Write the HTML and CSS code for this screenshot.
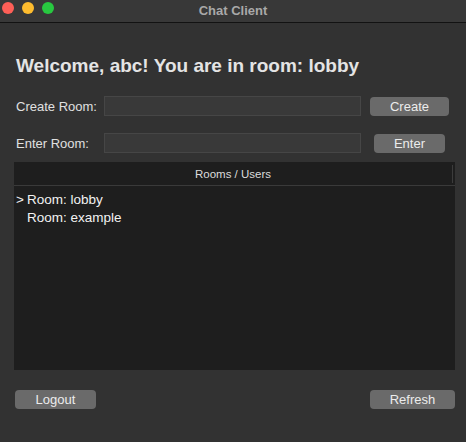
FILE: index.html
```html
<!DOCTYPE html>
<html>
<head>
<meta charset="utf-8">
<link rel="stylesheet" href="styles.css">
</head>
<body>
<div class="window">
  <div class="titlebar">
    <div class="lights">
      <span class="light red"></span>
      <span class="light yellow"></span>
      <span class="light green"></span>
    </div>
    <div class="title">Chat Client</div>
  </div>
  <div class="content">
    <h1 class="welcome">Welcome, abc! You are in room: lobby</h1>
    <div class="form">
      <label class="label">Create Room:</label>
      <div class="input"></div>
      <div class="btncell"><button class="btn btn-create">Create</button></div>
      <label class="label">Enter Room:</label>
      <div class="input"></div>
      <div class="btncell"><button class="btn btn-enter">Enter</button></div>
    </div>
    <div class="table">
      <div class="thead">
        <div class="th">Rooms / Users</div>
        <div class="thsep"></div>
      </div>
      <div class="tbody">
        <div class="row"><span class="arrow">&gt;</span><span>Room: lobby</span></div>
        <div class="row"><span class="arrow"></span><span>Room: example</span></div>
      </div>
    </div>
    <div class="footer">
      <button class="btn btn-logout">Logout</button>
      <button class="btn btn-refresh">Refresh</button>
    </div>
  </div>
</div>
</body>
</html>
```
FILE: styles.css
```css
html, body {
  margin: 0;
  padding: 0;
  background: #323232;
  font-family: "Liberation Sans", Arial, sans-serif;
  color: #e6e6e6;
}
.window {
  width: 466px;
  height: 442px;
  background: #323232;
}
.titlebar {
  height: 22px;
  background: #383838;
  border-bottom: 1px solid #121212;
  position: relative;
  display: flex;
  align-items: center;
  justify-content: center;
}
.lights {
  position: absolute;
  left: 2px;
  top: 2px;
  display: flex;
  gap: 8px;
}
.light {
  width: 12px;
  height: 12px;
  border-radius: 50%;
  display: block;
}
.red { background: #fe5f57; }
.yellow { background: #febc2e; }
.green { background: #28c840; }
.title {
  font-size: 13px;
  font-weight: bold;
  color: #a9a9a9;
  margin-top: -2px;
}
.content {
  padding: 0 11px 0 14px;
}
.welcome {
  margin: 32px 0 0 2px;
  font-size: 19px;
  font-weight: bold;
  color: #e4e4e4;
  line-height: 22px;
}
.form {
  margin-top: 19px;
  display: grid;
  grid-template-columns: 90px 257px 97px;
  grid-auto-rows: 20px;
  row-gap: 17px;
  align-items: center;
}
.label {
  font-size: 13px;
  padding-left: 2px;
  color: #e0e0e0;
}
.input {
  background: #393939;
  border: 1px solid #464646;
  box-sizing: border-box;
  height: 20px;
}
.btncell {
  display: flex;
  justify-content: center;
}
.btn {
  font-family: "Liberation Sans", Arial, sans-serif;
  font-size: 13px;
  color: #ececec;
  background: #6a6a6a;
  border: none;
  border-radius: 4px;
  height: 19px;
  padding: 0;
  line-height: 19px;
}
.btn-create { width: 79px; }
.btn-enter { width: 71px; }
.table {
  margin-top: 9px;
  height: 208px;
  background: #1e1e1e;
  width: 441px;
}
.thead {
  height: 23px;
  border-bottom: 1px solid #3a3a3a;
  display: flex;
  align-items: center;
  position: relative;
}
.th {
  flex: 1;
  text-align: center;
  font-size: 11.5px;
  color: #dcdcdc;
}
.thsep {
  width: 1px;
  height: 18px;
  background: #3c3c3c;
  margin-right: 2px;
}
.tbody {
  padding-top: 4px;
}
.row {
  display: flex;
  height: 18px;
  align-items: center;
  font-size: 13.5px;
  color: #f2f2f2;
}
.arrow {
  width: 13px;
  padding-left: 2px;
  box-sizing: border-box;
}
.footer {
  margin-top: 20px;
  display: flex;
  justify-content: space-between;
  padding-left: 1px;
}
.btn-logout { width: 81px; }
.btn-refresh { width: 85px; }
```
